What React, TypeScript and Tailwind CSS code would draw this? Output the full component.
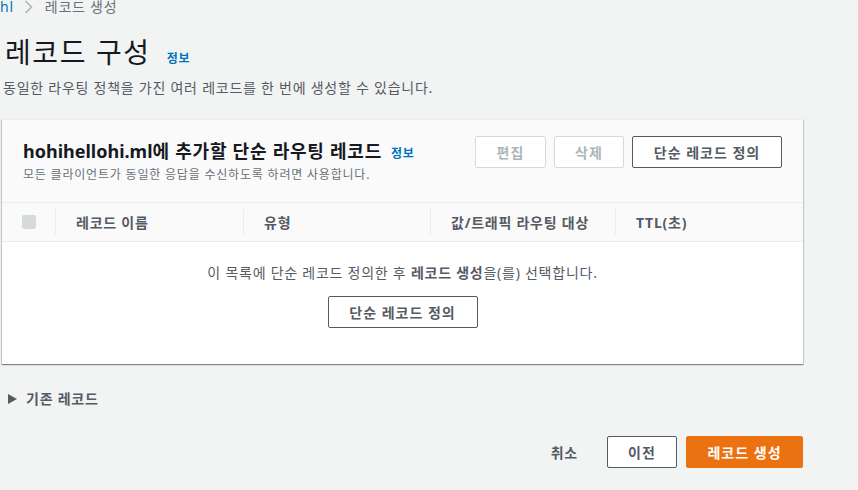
const font = { fontFamily: '"Noto Sans", "Noto Sans CJK KR", sans-serif' };

function Btn({ children, disabled, primary, className = "" }: { children: React.ReactNode; disabled?: boolean; primary?: boolean; className?: string }) {
  const tone = primary
    ? "border-[#ec7211] bg-[#ec7211] text-white"
    : disabled
      ? "border-[#d5dbdb] bg-white text-[#aab7b8]"
      : "border-[#545b64] bg-white text-[#545b64]";
  return (
    <button
      className={`flex h-[32px] items-center justify-center rounded-[2px] border text-[14px] font-bold tracking-[1px] ${tone} ${className}`}
    >
      {children}
    </button>
  );
}

function ColHead({ label, width, divider = true }: { label: string; width: string; divider?: boolean }) {
  return (
    <div className={`flex h-full items-center ${width}`}>
      {divider && <span className="h-[26px] w-px bg-[#eaeded]" />}
      <span className="pl-[20px] text-[14px] font-bold text-[#545b64]">{label}</span>
    </div>
  );
}

export default function App() {
  return (
    <div className="h-[490px] w-[858px] overflow-hidden bg-[#f2f3f3] tracking-[0.75px] text-[#16191f]" style={font}>
      <div className="ml-[2px] w-[801px]">
        <nav className="flex h-[14px] items-center gap-[10px] text-[14px] leading-none">
          <span className="-ml-[2px] text-[#0073bb]">hl</span>
          <svg width="9" height="14" viewBox="0 0 9 14" className="text-[#aab7b8]">
            <path d="M1.5 1l6 6-6 6" fill="none" stroke="currentColor" strokeWidth="1.6" />
          </svg>
          <span className="ml-[2px] text-[#687078]">레코드 생성</span>
        </nav>

        <div className="mt-[20px] flex items-baseline gap-[16px] pl-[3px]">
          <h1 className="text-[28px] leading-[36px] font-normal tracking-[1.6px]">레코드 구성</h1>
          <a className="text-[12px] font-bold text-[#0073bb]">정보</a>
        </div>
        <p className="mt-[7px] pl-[1px] text-[14px] text-[#545b64]">동일한 라우팅 정책을 가진 여러 레코드를 한 번에 생성할 수 있습니다.</p>

        <section className="mt-[21px] border-t border-[#eaeded] bg-white shadow-[0_1px_1px_0_rgba(0,28,36,0.3),1px_1px_1px_0_rgba(0,28,36,0.15),-1px_1px_1px_0_rgba(0,28,36,0.15)]">
          <div className="flex h-[83px] items-start justify-between border-b border-[#eaeded] bg-[#fafafa] pl-[21px] pr-[21px] pt-[16px]">
            <div className="pt-[4px]">
              <div className="flex items-baseline gap-[9px]">
                <h2 className="text-[18px] leading-[22px] font-bold">
                  <span className="tracking-normal">hohihellohi.ml</span>에 추가할 단순 라우팅 레코드
                </h2>
                <a className="text-[12px] font-bold text-[#0073bb]">정보</a>
              </div>
              <p className="mt-[3px] text-[12px] tracking-[0.8px] text-[#687078]">모든 클라이언트가 동일한 응답을 수신하도록 하려면 사용합니다.</p>
            </div>
            <div className="flex gap-[8px]">
              <Btn disabled className="w-[71px]">편집</Btn>
              <Btn disabled className="w-[70px]">삭제</Btn>
              <Btn className="w-[150px]">단순 레코드 정의</Btn>
            </div>
          </div>

          <div className="flex h-[39px] items-center border-b border-[#eaeded] bg-[#fafafa]">
            <div className="flex w-[53px] items-center justify-end pr-[19px]">
              <span className="h-[14px] w-[14px] rounded-[2px] bg-[#d5dbdb]" />
            </div>
            <ColHead label="레코드 이름" width="w-[188px]" />
            <ColHead label="유형" width="w-[187px]" />
            <ColHead label="값/트래픽 라우팅 대상" width="w-[185px]" />
            <ColHead label="TTL(초)" width="flex-1" />
          </div>

          <div className="flex h-[122px] flex-col items-center pt-[20px]">
            <p className="text-[14px] text-[#545b64]">
              이 목록에 단순 레코드 정의한 후 <b className="text-[#545b64]">레코드 생성</b>을(를) 선택합니다.
            </p>
            <Btn className="mt-[13px] w-[150px]">단순 레코드 정의</Btn>
          </div>
        </section>

        <div className="mt-[24px] flex items-center gap-[9px] pl-[6px] text-[14px] font-bold text-[#545b64]">
          <svg width="9" height="10" viewBox="0 0 9 10">
            <path d="M0 0l9 5-9 5z" fill="#545b64" />
          </svg>
          <span>기존 레코드</span>
        </div>

        <div className="mt-[27px] flex items-center justify-end">
          <span className="mr-[29px] text-[14px] font-bold text-[#545b64]">취소</span>
          <Btn className="mr-[9px] w-[70px]">이전</Btn>
          <Btn primary className="w-[117px]">레코드 생성</Btn>
        </div>
      </div>
    </div>
  );
}
